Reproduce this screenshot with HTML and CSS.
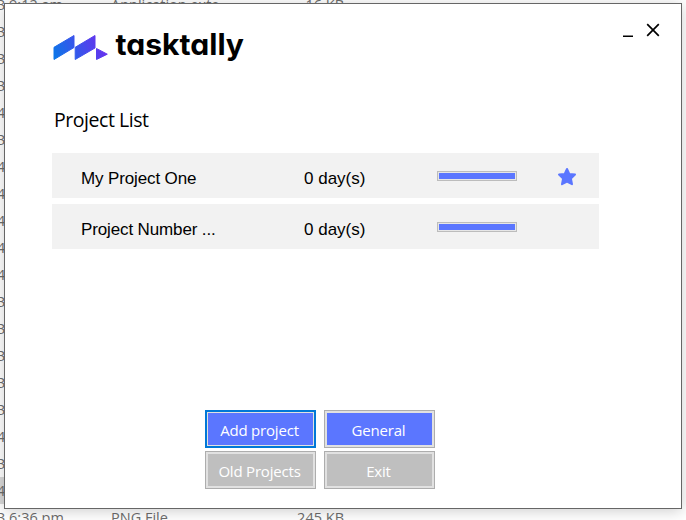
FILE: index.html
```html
<!DOCTYPE html>
<html lang="en">
<head>
<meta charset="utf-8">
<title>tasktally</title>
<link rel="stylesheet" href="styles.css">
</head>
<body>
<div class="files">
  <div class="file"><span class="date">3 9:12 am</span><span class="type">Application exte...</span><span class="size">16 KB</span></div>
  <div class="file"><span class="date">3</span></div>
  <div class="file"><span class="date">3</span></div>
  <div class="file"><span class="date">3</span></div>
  <div class="file"><span class="date">4</span></div>
  <div class="file"><span class="date">3</span></div>
  <div class="file"><span class="date">4</span></div>
  <div class="file"><span class="date">4</span></div>
  <div class="file"><span class="date">4</span></div>
  <div class="file"><span class="date">4</span></div>
  <div class="file"><span class="date">4</span></div>
  <div class="file"><span class="date">3</span></div>
  <div class="file"><span class="date">3</span></div>
  <div class="file"><span class="date">3</span></div>
  <div class="file"><span class="date">3</span></div>
  <div class="file"><span class="date">3</span></div>
  <div class="file"><span class="date">4</span></div>
  <div class="file"><span class="date">3</span></div>
  <div class="file selected"><span class="date">4</span></div>
  <div class="file"><span class="date">3 6:36 pm</span><span class="type">PNG File</span><span class="size">245 KB</span></div>
</div>
<main class="window">
  <header class="titlebar">
    <svg class="logo" width="200" height="40" viewBox="0 0 200 40" role="img" aria-label="tasktally">
      <defs>
        <linearGradient id="brand" gradientUnits="userSpaceOnUse" x1="4" y1="30" x2="50" y2="12">
          <stop offset="0" stop-color="#0a78e8"/>
          <stop offset="1" stop-color="#6334ee"/>
        </linearGradient>
      </defs>
      <path fill="url(#brand)" stroke="url(#brand)" stroke-linejoin="round" d="M4 17.3 24 5.5V17.5L4 29.5ZM25.2 17.3 45 5.5V18L25.2 29.5ZM46.5 18.5 57.3 24.2 46.5 29.5Z"/>
      <text class="wordmark" x="65.5" y="25" textLength="128.5" lengthAdjust="spacingAndGlyphs">tasktally</text>
    </svg>
    <div class="controls">
      <svg width="12" height="14" viewBox="0 0 12 14"><path d="M1 13.5H11" stroke="#000" stroke-width="2"/></svg>
      <svg width="14" height="14" viewBox="0 0 14 14"><path d="M1.2 1.2 12.8 12.8M12.8 1.2 1.2 12.8" stroke="#000" stroke-width="1.7"/></svg>
    </div>
  </header>
  <h1 class="heading">Project List</h1>
  <section class="projects">
    <div class="project">
      <span class="name">My Project One</span><span class="days">0 day(s)</span><span class="bar"></span>
      <svg class="star" width="20" height="20" viewBox="0 0 20 20"><path fill="#5b76ff" stroke="#5b76ff" stroke-width="2" stroke-linejoin="round" d="M10 2 12.3 6.9 18 7.6 13.9 11.5 15 17.2 10 14.5 5 17.2 6.1 11.5 2 7.6 7.7 6.9Z"/></svg>
    </div>
    <div class="project">
      <span class="name">Project Number ...</span><span class="days">0 day(s)</span><span class="bar"></span>
    </div>
  </section>
  <nav class="actions">
    <button class="btn focused">Add project</button>
    <button class="btn">General</button>
    <button class="btn muted">Old Projects</button>
    <button class="btn muted">Exit</button>
  </nav>
</main>
</body>
</html>
```
FILE: styles.css
```css
* { box-sizing: border-box; }
body {
  margin: 0;
  width: 686px;
  height: 520px;
  overflow: hidden;
  position: relative;
  background: #fff;
  font-family: "Open Sans", "Noto Sans", sans-serif;
}
.files {
  width: 400px;
  margin-top: -9px;
  color: #6d6d6d;
  font-size: 14.5px;
}
.file {
  display: grid;
  grid-template-columns: 111px 150px 83px;
  height: 27px;
  line-height: 28px;
  white-space: nowrap;
}
.date { margin-left: -3px; }
.size { text-align: right; }
.selected { background: #d9d9d9; }
.window {
  position: absolute;
  left: 4px;
  top: 3px;
  width: 678px;
  height: 506px;
  border: 1px solid #666;
  background: #fff;
  box-shadow: 0 2px 14px rgba(0, 0, 0, .2);
  display: flex;
  flex-direction: column;
}
.titlebar {
  display: flex;
  justify-content: space-between;
  padding: 26px 21px 0 45px;
  height: 101px;
}
.logo { flex: none; }
.wordmark {
  font: 700 29.5px Inter, sans-serif;
  font-feature-settings: "cv11";
}
.controls {
  display: flex;
  gap: 12px;
  margin-top: -7px;
}
.heading {
  margin: 0 0 0 49px;
  height: 48px;
  line-height: 30px;
  font-size: 19.5px;
  font-weight: 400;
  letter-spacing: -.45px;
}
.projects {
  display: grid;
  gap: 6px;
  width: 547px;
  margin-left: 47px;
}
.project {
  display: grid;
  grid-template-columns: 223px 133px 120px 1fr;
  height: 45px;
  padding-left: 29px;
  background: #f2f2f2;
  font: 17px/51px "Liberation Sans", Arial, sans-serif;
  white-space: nowrap;
}
.name { letter-spacing: -.13px; }
.bar {
  width: 80px;
  height: 10px;
  margin-top: 18px;
  border: 1px solid #bcbcbc;
  background: #5b76ff;
  box-shadow: inset 0 0 0 1px #e6e6e6;
}
.star { margin-top: 14px; }
.actions {
  display: grid;
  grid-template-columns: 111px 111px;
  grid-auto-rows: 38px;
  gap: 3px 8px;
  margin: auto 0 19px 200px;
}
.btn {
  padding: 1px 2px 0 0;
  border: 1px solid #adadad;
  background: #5b76ff;
  box-shadow: inset 0 0 0 2px #e1e1e1;
  color: #fff;
  font: 15px "Open Sans", "Noto Sans", sans-serif;
  letter-spacing: -.2px;
}
.focused {
  border: 2px solid #0078d7;
  box-shadow: inset 0 0 0 1px #e1e1e1;
}
.muted { background: #bfbfbf; }
```
